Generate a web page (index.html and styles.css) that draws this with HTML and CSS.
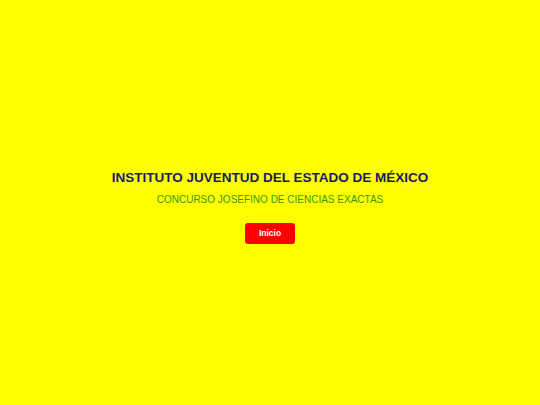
FILE: index.html
```html
<!DOCTYPE html>
<html lang="es">
<head>
<meta charset="utf-8">
<link rel="stylesheet" href="styles.css">
</head>
<body>
<main class="hero">
  <h1 class="title">INSTITUTO JUVENTUD DEL ESTADO DE MÉXICO</h1>
  <p class="subtitle">CONCURSO JOSEFINO DE CIENCIAS EXACTAS</p>
  <a class="btn" href="#">Inicio</a>
</main>
</body>
</html>
```
FILE: styles.css
```css
html, body {
  margin: 0;
  padding: 0;
  height: 100%;
}
body {
  background: #ffff00;
  font-family: "Liberation Sans", Arial, sans-serif;
}
.hero {
  height: 100%;
  display: flex;
  flex-direction: column;
  align-items: center;
  justify-content: center;
  padding-top: 9px;
  box-sizing: border-box;
}
.title {
  margin: 0;
  font-size: 13.5px;
  font-weight: bold;
  color: #1a1a66;
  line-height: 16px;
}
.subtitle {
  margin: 8px 0 0;
  font-size: 10px;
  color: #339900;
  line-height: 12px;
}
.btn {
  margin-top: 17px;
  display: block;
  width: 50px;
  height: 21px;
  line-height: 21px;
  text-align: center;
  background: #ff0000;
  color: #ffffff;
  font-size: 8.5px;
  font-weight: bold;
  text-decoration: none;
  border-radius: 3px;
}
```
